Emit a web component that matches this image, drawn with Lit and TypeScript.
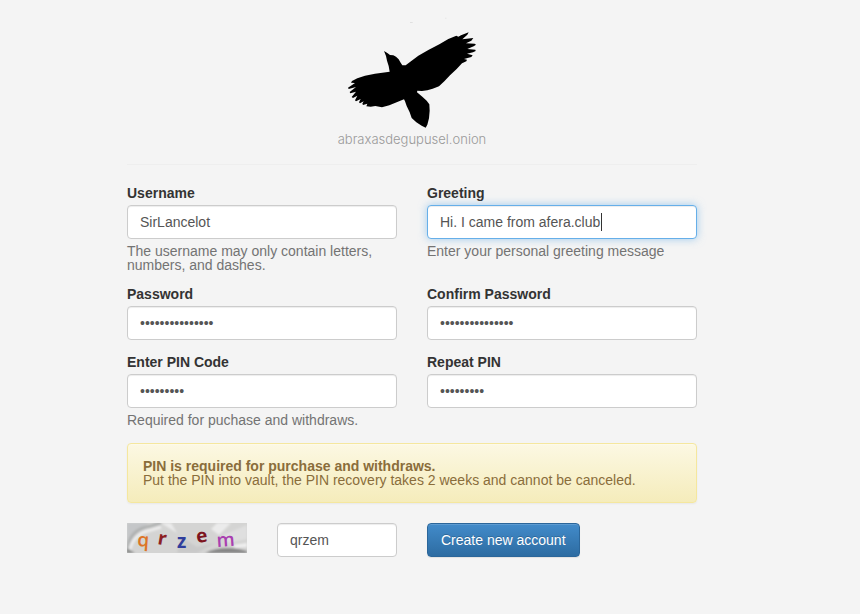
import { LitElement, html, svg, css } from "lit";
import { customElement, property, query } from "lit/decorators.js";

const shared = css`
  * {
    box-sizing: border-box;
  }
  input {
    display: block;
    width: 100%;
    height: 34px;
    margin: 0;
    padding: 6px 12px;
    font: 14px/20px "Liberation Sans", Arial, sans-serif;
    color: #555;
    background: #fff;
    border: 1px solid #ccc;
    border-radius: 4px;
    outline: 0;
    box-shadow: inset 0 1px 1px rgba(0, 0, 0, 0.075);
  }
  input.focused,
  input:focus {
    border-color: #66afe9;
    box-shadow: inset 0 1px 1px rgba(0, 0, 0, 0.075),
      0 0 8px rgba(102, 175, 233, 0.6);
  }
`;

@customElement("form-field")
class FormField extends LitElement {
  @property() label = "";
  @property() type = "text";
  @property() value = "";
  @property() help = "";
  @property({ type: Boolean }) active = false;
  @query("input") input!: HTMLInputElement;

  static styles = [
    shared,
    css`
      :host {
        display: block;
      }
      label {
        display: block;
        margin-bottom: 5px;
        font-weight: bold;
        color: #333;
      }
      .focused {
        caret-color: transparent;
        background: linear-gradient(#333, #333) 173px 7px / 1px 18px no-repeat #fff;
      }
      .help {
        margin: 5px 0 0;
        color: #737373;
      }
    `,
  ];

  firstUpdated() {
    if (this.active) {
      this.input.focus();
      const end = this.input.value.length;
      this.input.setSelectionRange(end, end);
    }
  }

  render() {
    return html`
      <label for="control">${this.label}</label>
      <input
        id="control"
        class=${this.active ? "focused" : ""}
        type=${this.type}
        .value=${this.value}
        autocomplete="off"
      />
      ${this.help ? html`<p class="help">${this.help}</p>` : ""}
    `;
  }
}

const glyphs = [
  { ch: "q", x: 10, y: 23, turn: 4, fill: "#dd7426", weight: 600 },
  { ch: "r", x: 30, y: 21, turn: 10, fill: "#8c1f24", weight: 700 },
  { ch: "z", x: 50, y: 25, turn: 0, fill: "#2f3d9c", weight: 700 },
  { ch: "e", x: 70, y: 20, turn: -8, fill: "#7d1420", weight: 700 },
  { ch: "m", x: 90, y: 24, turn: -4, fill: "#a93fb0", weight: 600 },
];

@customElement("app-root")
class AppRoot extends LitElement {
  static styles = [
    shared,
    css`
      :host {
        display: block;
        min-height: 100vh;
        font: 14px/14px "Liberation Sans", Arial, sans-serif;
        color: #333;
        background: #f4f4f4;
      }
      main {
        padding: 10px 163px 20px 127px;
      }
      .brand {
        display: flex;
        flex-direction: column;
        align-items: center;
        padding-bottom: 18px;
        border-bottom: 1px solid #eee;
        font-family: Inter, "Liberation Sans", sans-serif;
        font-size: 13px;
        font-weight: 300;
        color: #999;
      }
      .bird {
        display: block;
        width: 150px;
        height: 122px;
      }
      form {
        padding-top: 21px;
      }
      .fields,
      .submit {
        display: grid;
        grid-template-columns: 1fr 1fr;
        gap: 15px 30px;
      }
      .alert {
        margin: 16px 0 20px;
        padding: 15px;
        color: #8a6d3b;
        background: linear-gradient(#fcf8e3, #f5ecbb);
        border: 1px solid #f5e79e;
        border-radius: 4px;
        box-shadow: inset 0 1px 0 rgba(255, 255, 255, 0.25),
          0 1px 2px rgba(0, 0, 0, 0.05);
      }
      .alert strong {
        display: block;
      }
      .check {
        display: grid;
        grid-template-columns: 1fr 1fr;
        gap: 30px;
      }
      .captcha {
        display: block;
        width: 100%;
        height: 30px;
        overflow: visible;
        font-family: "Open Sans", sans-serif;
        font-size: 19px;
      }
      button {
        justify-self: start;
        height: 34px;
        margin: 0;
        padding: 6px 13px;
        font: 14px/20px "Liberation Sans", Arial, sans-serif;
        color: #fff;
        background: linear-gradient(#428bca, #2d6ca2);
        border: 1px solid #2b669a;
        border-radius: 4px;
        text-shadow: 0 -1px 0 rgba(0, 0, 0, 0.2);
        box-shadow: inset 0 1px 0 rgba(255, 255, 255, 0.15),
          0 1px 1px rgba(0, 0, 0, 0.075);
      }
    `,
  ];

  render() {
    return html`
      <main>
        <header class="brand">
          <svg class="bird" viewBox="-1 0 450 366" aria-hidden="true">
            <path d="M218 36h8v3h-8zM324 23h3v3h-3z" fill="#e0e0e0" />
            <path
              transform="translate(8 0)"
              d="M132 123L142 129L150 135L160 136L168 140L176 148L182 158L187 166L197 166L213 154L235 137L265 120L298 103L325 87L349 77L355 80L363 76L386 67L382 74L367 88L400 84L394 92L378 100L404 101L408 104L401 109L382 117L406 119L407 123L399 127L381 131L398 136L394 141L372 147L381 149L379 154L366 160L350 177L330 196L313 214L297 229L278 236L262 241L246 243L232 242L231 247L247 260L260 272L268 283L269 302L267 325L262 344L257 353L245 347L229 337L215 324L209 307L200 288L195 274L192 268L170 277L148 286L126 292L106 288L92 290L79 289L82 281L69 285L67 281L71 274L60 280L57 277L62 267L48 274L45 271L52 257L39 264L35 261L48 245L31 250L29 246L48 231L26 237L24 233L45 219L33 218L36 213L52 205L75 197L105 191L149 185L146 168L141 152L138 138Z"
            />
          </svg>
          <span>abraxasdegupusel.onion</span>
        </header>
        <form @submit=${(e: Event) => e.preventDefault()}>
          <div class="fields">
            <form-field
              label="Username"
              value="SirLancelot"
              help="The username may only contain letters, numbers, and dashes."
            ></form-field>
            <form-field
              label="Greeting"
              value="Hi. I came from afera.club"
              help="Enter your personal greeting message"
              active
            ></form-field>
            <form-field label="Password" type="password" value="camelot-sword-9"></form-field>
            <form-field label="Confirm Password" type="password" value="camelot-sword-9"></form-field>
            <form-field
              label="Enter PIN Code"
              type="password"
              value="123456789"
              help="Required for puchase and withdraws."
            ></form-field>
            <form-field label="Repeat PIN" type="password" value="123456789"></form-field>
          </div>
          <div class="alert" role="alert">
            <strong>PIN is required for purchase and withdraws.</strong>
            Put the PIN into vault, the PIN recovery takes 2 weeks and cannot be canceled.
          </div>
          <div class="submit">
            <div class="check">
              <svg class="captcha" viewBox="0 0 120 30" role="img" aria-label="Captcha">
                <defs>
                  <filter id="soft" x="0" y="0" width="1" height="1">
                    <feGaussianBlur stdDeviation="1" />
                  </filter>
                  <clipPath id="frame"><rect width="120" height="30" /></clipPath>
                </defs>
                <rect width="120" height="30" fill="#d4d4d3" />
                <g clip-path="url(#frame)">
                  <g filter="url(#soft)">
                    <rect width="120" height="30" fill="#d4d4d3" />
                    <path d="M0 0H22L6 10L0 20Z" fill="#c4c6c8" />
                    <path d="M0 30Q1 6 24 3L34 0" fill="none" stroke="#aeb0b0" stroke-width="3" />
                    <path d="M2 30Q5 11 24 7L34 4" fill="none" stroke="#ececec" stroke-width="3" />
                    <path d="M34 0L50 10L44 0ZM84 6L90 0H104L92 12Z" fill="#ebebeb" />
                    <path d="M54 14L70 24L88 20L70 30H50Z" fill="#c9c9c9" />
                    <path d="M96 12L120 2V16L100 20Z" fill="#dfdfdf" />
                    <path d="M78 30Q92 23 112 26L120 28V30Z" fill="#858585" />
                    <path d="M106 22L120 20V24L108 25Z" fill="#efefef" />
                    <path d="M0 30V25L8 30Z" fill="#888a88" />
                  </g>
                </g>
                ${glyphs.map(
                  (g) => svg`<text
                    x=${g.x}
                    y=${g.y}
                    fill=${g.fill}
                    font-weight=${g.weight}
                    transform="rotate(${g.turn} ${g.x} ${g.y})"
                  >${g.ch}</text>`
                )}
              </svg>
              <input type="text" aria-label="Captcha text" value="qrzem" />
            </div>
            <button type="submit">Create new account</button>
          </div>
        </form>
      </main>
    `;
  }
}
